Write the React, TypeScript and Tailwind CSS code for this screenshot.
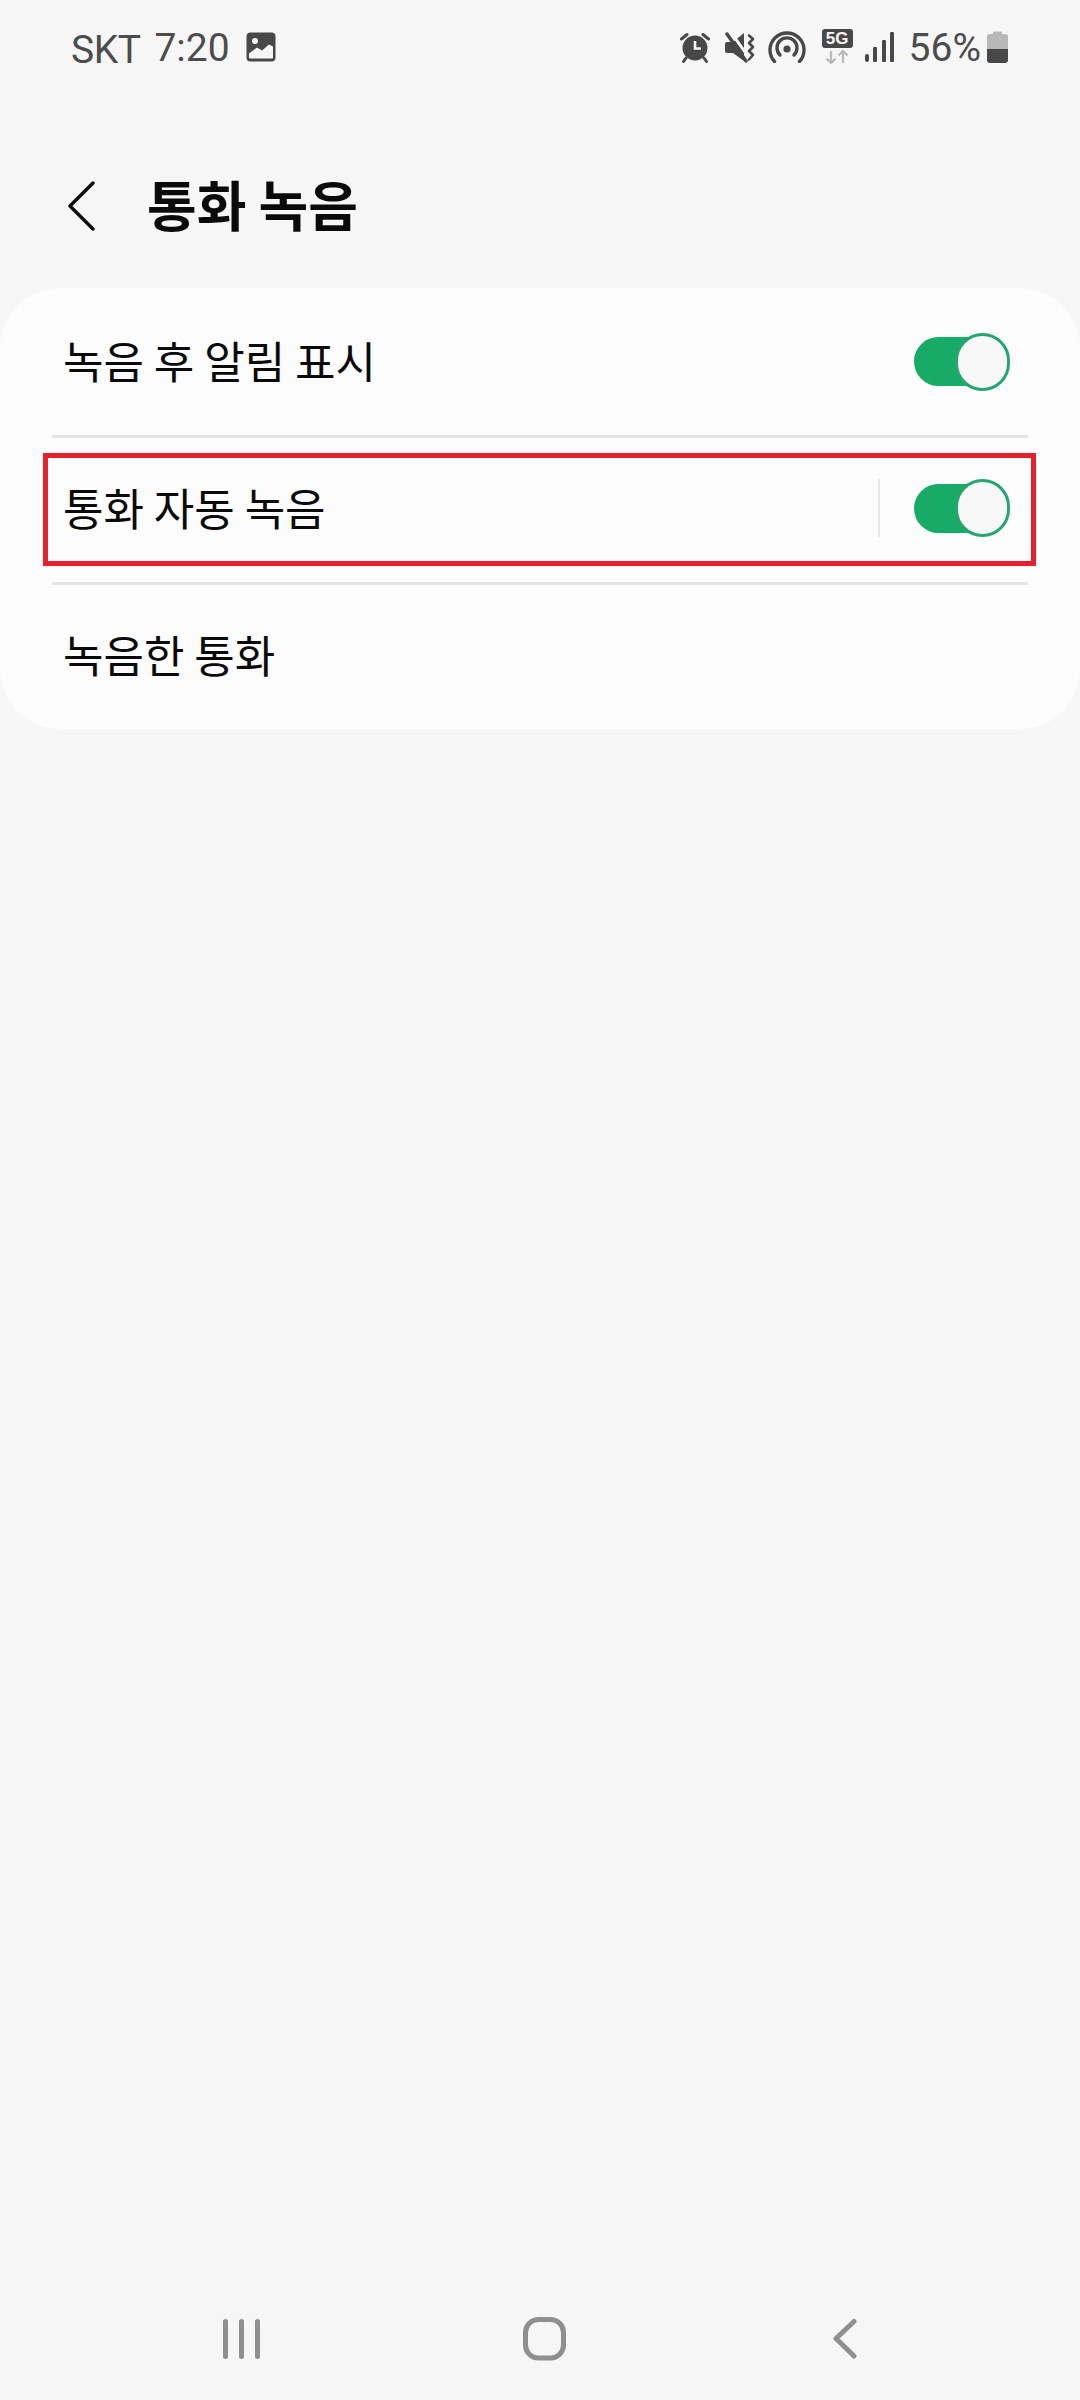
import React from "react";

const cjk = { fontFamily: '"Noto Sans CJK KR", "Noto Sans", sans-serif' };

function Toggle() {
  return (
    <div className="relative w-[96px] h-[58px] flex items-center shrink-0">
      <div className="w-[90px] h-[49px] rounded-full bg-[#18ab68]" />
      <div className="absolute left-[41px] top-0 w-[55px] h-[58px] rounded-full bg-[#f8f8f8] border-[3px] border-[#25a670]" />
    </div>
  );
}

function PictureIcon() {
  return (
    <svg width="30" height="30" viewBox="0 0 30 30">
      <rect x="0.5" y="0.5" width="29" height="29" rx="4" fill="#484848" />
      <circle cx="9" cy="9" r="3" fill="#f6f6f6" />
      <path d="M3 25.5V21.5L11 15.5L16 18.5L23 12.5L27 14.5V25.5Q27 26.5 26 26.5H4Q3 26.5 3 25.5Z" fill="#f6f6f6" />
    </svg>
  );
}

function AlarmIcon() {
  return (
    <svg width="30" height="32" viewBox="0 0 30 32">
      <circle cx="15" cy="17" r="12.5" fill="#484848" />
      <path d="M15 10V17.5H21" fill="none" stroke="#f6f6f6" strokeWidth="2.6" />
      <path d="M1.5 8L7 3.5M28.5 8L23 3.5M6 27L3.5 30.5M24 27L26.5 30.5" fill="none" stroke="#484848" strokeWidth="3" strokeLinecap="round" />
    </svg>
  );
}

function MuteIcon() {
  return (
    <svg width="30" height="32" viewBox="0 0 30 32">
      <path d="M0 12Q0 10 2 10H8L19 1V29L8 21H2Q0 21 0 19Z" fill="#484848" />
      <path d="M5 -1L25 27" stroke="#f6f6f6" strokeWidth="3" />
      <path d="M2 2L21 29" stroke="#484848" strokeWidth="3.400" strokeLinecap="round" />
      <path d="M24 3.500L28 7L24 11L28 15L24 19L28 23L24 27.500" fill="none" stroke="#484848" strokeWidth="2.600" strokeLinecap="round" strokeLinejoin="round" />
    </svg>
  );
}

function HotspotIcon() {
  return (
    <svg width="38" height="32" viewBox="0 0 38 32">
      <path d="M6.500 30.500A17 17 0 1 1 31.500 30.500" fill="none" stroke="#484848" strokeWidth="3.400" strokeLinecap="round" />
      <path d="M12 24A10 10 0 1 1 26 24" fill="none" stroke="#484848" strokeWidth="3.400" strokeLinecap="round" />
      <circle cx="19" cy="18" r="3.600" fill="#484848" />
    </svg>
  );
}

function FiveGIcon() {
  return (
    <div className="relative w-[31px] h-[34px]">
      <div
        className="h-[19px] w-[31px] rounded-[3px] bg-[#484848] text-[#f6f6f6] text-[17px] font-bold leading-[19px] text-center"
        style={{ fontFamily: '"Liberation Sans", sans-serif' }}
      >
        5G
      </div>
      <svg className="absolute left-[3px] top-[21px]" width="24" height="14" viewBox="0 0 24 14">
        <path d="M6 1V13M1.500 8.500L6 13L10.500 8.500M18 13V1M13.500 5.500L18 1L22.500 5.500" fill="none" stroke="#b9b9b9" strokeWidth="2.200" />
      </svg>
    </div>
  );
}

function SignalIcon() {
  return (
    <svg width="29" height="30" viewBox="0 0 29 30">
      <rect x="0" y="22" width="4" height="8" rx="2" fill="#484848" />
      <rect x="8" y="15" width="4" height="15" rx="1" fill="#484848" />
      <rect x="17" y="8" width="4" height="22" rx="1" fill="#484848" />
      <rect x="25" y="0" width="4" height="30" rx="1" fill="#484848" />
    </svg>
  );
}

function BatteryIcon() {
  return (
    <svg width="21" height="32" viewBox="0 0 21 32">
      <path d="M6 3V1.500Q6 0.500 7 0.500H14Q15 0.500 15 1.500V3H18Q21 3 21 6V18H0V6Q0 3 3 3Z" fill="#b8b8b8" />
      <path d="M0 18H21V29Q21 32 18 32H3Q0 32 0 29Z" fill="#484848" />
    </svg>
  );
}

export default function App() {
  return (
    <div className="w-[1080px] h-[2400px] bg-[#f6f6f6] flex flex-col overflow-hidden" style={cjk}>
      <div
        className="h-[64px] pt-[29px] pl-[71px] pr-[72px] flex items-start text-[#4c4c4c]"
        style={{ fontFamily: 'Roboto, sans-serif' }}
      >
        <span className="text-[39px] leading-[40px] mt-[1px] tracking-[-0.5px]">SKT</span>
        <span className="text-[39px] leading-[40px] ml-[14px] -mt-[1px]">7:20</span>
        <div className="ml-[16px] mt-[3px]"><PictureIcon /></div>
        <div className="flex-1" />
        <div className="flex items-start">
          <div className="mt-[2px]"><AlarmIcon /></div>
          <div className="ml-[15px] mt-[3px]"><MuteIcon /></div>
          <div className="ml-[13px] mt-[2px]"><HotspotIcon /></div>
          <div className="ml-[16px]"><FiveGIcon /></div>
          <div className="ml-[12px] mt-[3px]"><SignalIcon /></div>
          <span className="ml-[15px] text-[39px] leading-[40px] -mt-[1px]">56%</span>
          <div className="ml-[6px] mt-[2px]"><BatteryIcon /></div>
        </div>
      </div>

      <div className="h-[224px] pt-[60px] flex items-center pl-[68px]">
        <svg width="27" height="50" viewBox="0 0 27 50" className="shrink-0">
          <path d="M25 2L2 25L25 48" fill="none" stroke="#0c0c0c" strokeWidth="3.400" strokeLinecap="round" strokeLinejoin="round" />
        </svg>
        <h1 className="ml-[52px] mb-[4px] text-[54px] font-bold text-[#0a0a0a] leading-none">통화 녹음</h1>
      </div>

      <div className="relative bg-[#fcfcfc] rounded-[60px]">
        <div className="h-[147px] pl-[63px] pr-[70px] flex items-center justify-between">
          <span className="text-[44px] text-[#0a0a0a] leading-none mb-[3px]">녹음 후 알림 표시</span>
          <Toggle />
        </div>
        <div className="ml-[52px] mr-[52px] h-[3px] bg-[#e4e4e4]" />
        <div className="h-[144px] pb-[4px] pl-[63px] pr-[70px] flex items-center">
          <span className="text-[44px] text-[#0a0a0a] leading-none flex-1 mb-[2px]">통화 자동 녹음</span>
          <div className="w-[2px] h-[58px] bg-[#e6e6e6] mr-[34px]" />
          <Toggle />
        </div>
        <div className="ml-[52px] mr-[52px] h-[3px] bg-[#e4e4e4]" />
        <div className="h-[144px] pb-[6px] pl-[63px] flex items-center">
          <span className="text-[44px] text-[#0a0a0a] leading-none">녹음한 통화</span>
        </div>
        <div className="absolute left-[43px] top-[165px] w-[993px] h-[113px] border-[5px] border-[#e6202d]" />
      </div>

      <div className="flex-1" />

      <div className="h-[44px] mb-[39px] flex items-center">
        <svg className="ml-[222px]" width="40" height="44" viewBox="0 0 40 44">
          <path d="M3.500 4.500V39.500M19.500 4.500V39.500M35.500 4.500V39.500" fill="none" stroke="#8f8f8f" strokeWidth="5" strokeLinecap="round" />
        </svg>
        <svg className="ml-[261px]" width="43" height="44" viewBox="0 0 43 44">
          <rect x="2.500" y="2.500" width="38" height="38.500" rx="13" fill="none" stroke="#8f8f8f" strokeWidth="5" />
        </svg>
        <svg className="ml-[267px]" width="24" height="44" viewBox="0 0 24 44">
          <path d="M21 4.500L3 21.500L21 39" fill="none" stroke="#8f8f8f" strokeWidth="5" strokeLinecap="round" strokeLinejoin="round" />
        </svg>
      </div>
    </div>
  );
}
